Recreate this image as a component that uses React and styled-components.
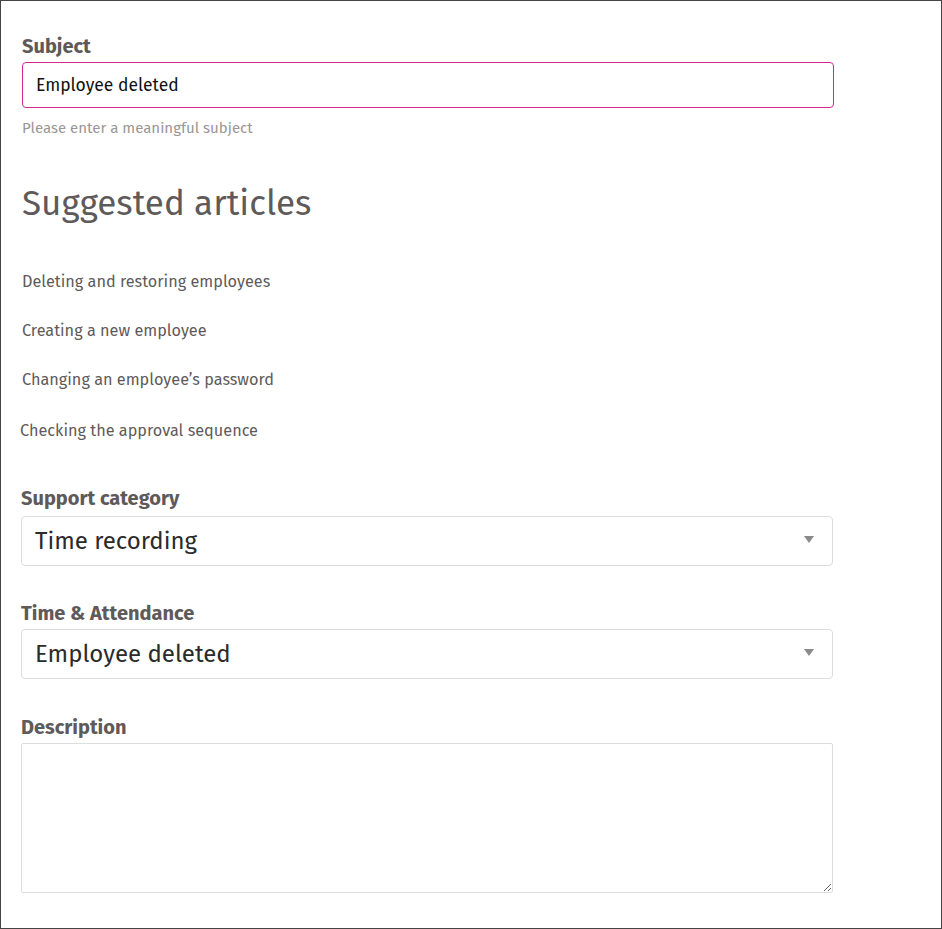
import React from "react";
import styled, { createGlobalStyle } from "styled-components";

const GlobalStyle = createGlobalStyle`
  html, body {
    margin: 0;
    padding: 0;
    background: #fff;
  }
  * {
    box-sizing: border-box;
  }
`;

const Frame = styled.div`
  width: 942px;
  height: 929px;
  border: 1px solid #444;
  padding: 33px 0 0 20px;
  font-family: "Fira Sans", Roboto, "Liberation Sans", sans-serif;
  color: #5f5a5a;
`;

const Form = styled.div`
  width: 812px;
  display: flex;
  flex-direction: column;
`;

const Field = styled.div`
  display: flex;
  flex-direction: column;
  margin-top: ${(p) => p.$top || 0}px;
  margin-left: ${(p) => p.$shift || 0}px;
`;

const Label = styled.label`
  font-size: 20px;
  line-height: 24px;
  font-weight: 700;
  color: #5f5a5a;
  margin-bottom: ${(p) => p.$gap || 5}px;
`;

const TextInput = styled.input`
  height: 46px;
  width: 812px;
  border: 1px solid #d6288a;
  border-radius: 4px;
  padding: 0 13px;
  font-family: inherit;
  font-size: 17.5px;
  color: #111;
  outline: none;
`;

const Help = styled.div`
  margin-top: 10px;
  font-size: 15px;
  line-height: 20px;
  color: #9a9696;
`;

const Heading = styled.h2`
  margin: 43px 0 0 1px;
  font-size: 35px;
  line-height: 44px;
  font-weight: 400;
  color: #5f5a5a;
`;

const Articles = styled.div`
  display: flex;
  flex-direction: column;
  margin-top: 45px;
`;

const Article = styled.a`
  font-size: 16.25px;
  line-height: 24px;
  color: #5f5a5a;
  text-decoration: none;
  margin-top: ${(p) => p.$top || 0}px;
  margin-left: ${(p) => p.$shift || 0}px;
  cursor: pointer;
`;

const SelectBox = styled.div`
  height: 50px;
  width: 812px;
  border: 1px solid #ddd;
  border-radius: 4px;
  padding: 0 18px 0 13px;
  display: flex;
  align-items: center;
  justify-content: space-between;
  font-size: 24px;
  color: #2b2b2b;
`;

const Arrow = styled.span`
  width: 0;
  height: 0;
  margin-bottom: 3px;
  border-left: 5px solid transparent;
  border-right: 5px solid transparent;
  border-top: 7px solid #8a8a8a;
`;

const TextArea = styled.textarea`
  height: 150px;
  width: 812px;
  border: 1px solid #ddd;
  border-radius: 2px;
  resize: vertical;
  font-family: inherit;
  font-size: 16px;
  outline: none;
`;

const articles = [
  { title: "Deleting and restoring employees", top: 0, shift: 1 },
  { title: "Creating a new employee", top: 25, shift: 1 },
  { title: "Changing an employee\u2019s password", top: 25, shift: 1 },
  { title: "Checking the approval sequence", top: 27, shift: -1 },
];

const Select = ({ value }) => (
  <SelectBox>
    <span>{value}</span>
    <Arrow />
  </SelectBox>
);

const App = () => {
  return (
    <>
      <GlobalStyle />
      <Frame>
        <Form>
          <Field $shift={1}>
            <Label $gap={4}>Subject</Label>
            <TextInput defaultValue="Employee deleted" />
            <Help>Please enter a meaningful subject</Help>
          </Field>

          <Heading>Suggested articles</Heading>

          <Articles>
            {articles.map((a) => (
              <Article key={a.title} $top={a.top} $shift={a.shift}>
                {a.title}
              </Article>
            ))}
          </Articles>

          <Field $top={43}>
            <Label $gap={6}>Support category</Label>
            <Select value="Time recording" />
          </Field>

          <Field $top={35}>
            <Label $gap={4}>Time &amp; Attendance</Label>
            <Select value="Employee deleted" />
          </Field>

          <Field $top={36}>
            <Label $gap={4}>Description</Label>
            <TextArea />
          </Field>
        </Form>
      </Frame>
    </>
  );
};

export default App;
